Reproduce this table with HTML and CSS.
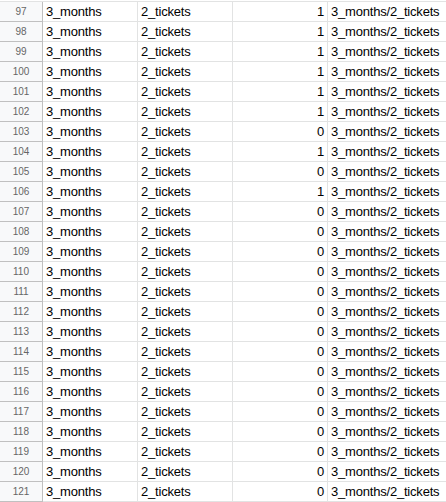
FILE: index.html
```html
<!DOCTYPE html>
<html>
<head>
<meta charset="utf-8">
<link rel="stylesheet" href="styles.css">
</head>
<body>
<div class="sheet" id="sheet"></div>
<script>
var vals = [1,1,1,1,1,1,0,1,0,1,0,0,0,0,0,0,0,0,0,0,0,0,0,0,0];
var html = '';
for (var i = 0; i < vals.length; i++) {
  html += '<div class="rh">' + (97 + i) + '</div>' +
    '<div class="c">3_months</div>' +
    '<div class="c">2_tickets</div>' +
    '<div class="c num">' + vals[i] + '</div>' +
    '<div class="c last">3_months/2_tickets</div>';
}
document.getElementById('sheet').innerHTML = html;
</script>
</body>
</html>
```

FILE: styles.css
```css
html, body {
  margin: 0;
  padding: 0;
  background: #ffffff;
}
.sheet {
  display: grid;
  grid-template-columns: 43px 95px 95px 95px 1fr;
  grid-auto-rows: 20px;
  margin-top: 1px;
  border-top: 1px solid #e2e3e3;
  font-family: "Liberation Sans", Arial, sans-serif;
  font-size: 13px;
  color: #000;
}
.rh {
  box-sizing: border-box;
  background: #f8f9fa;
  border-right: 1px solid #c0c0c0;
  border-bottom: 1px solid #c0c0c0;
  color: #666666;
  font-size: 10px;
  text-align: center;
  line-height: 19px;
}
.c {
  box-sizing: border-box;
  border-right: 1px solid #e2e3e3;
  border-bottom: 1px solid #e2e3e3;
  padding: 0 3px;
  line-height: 19px;
  letter-spacing: -0.2px;
  white-space: nowrap;
  overflow: hidden;
}
.num {
  text-align: right;
}
.last {
  border-right: none;
}
```
